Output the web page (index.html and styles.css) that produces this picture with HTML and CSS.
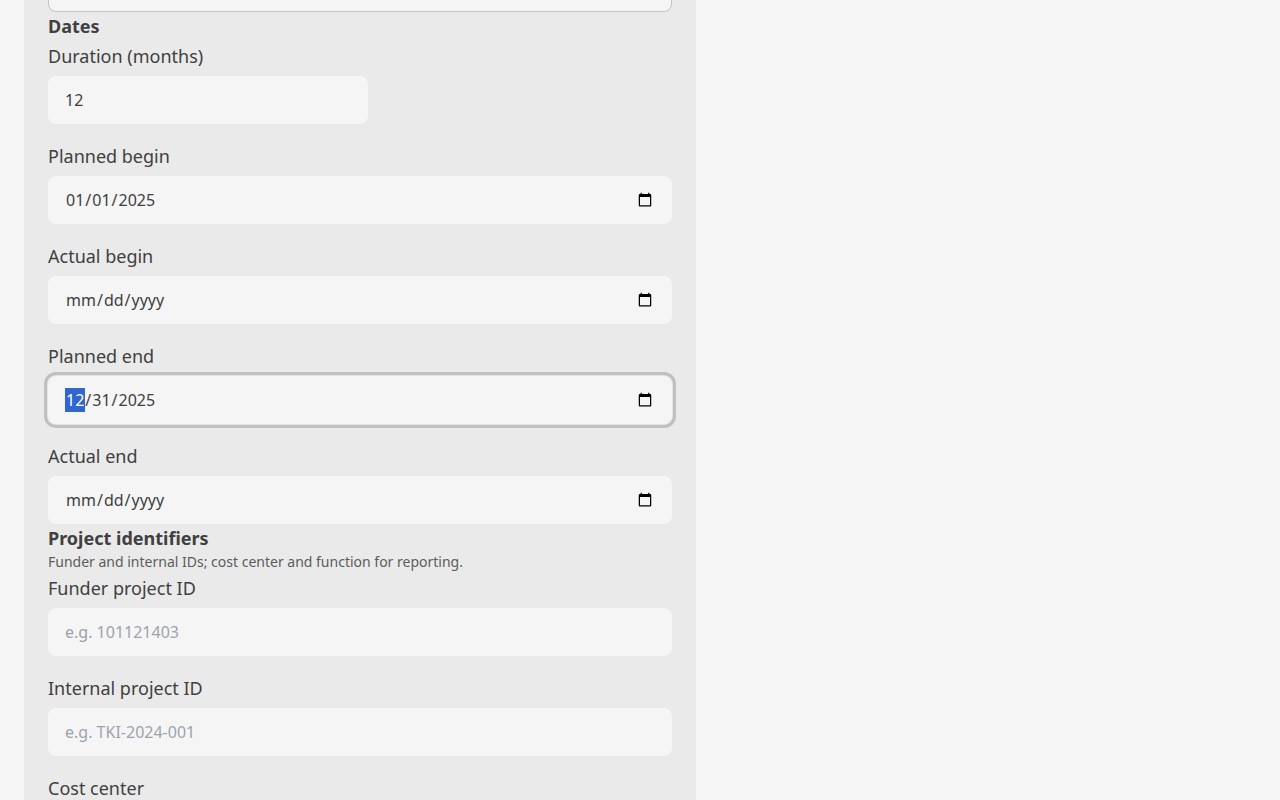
FILE: index.html
```html
<!DOCTYPE html>
<html lang="en">
<head>
    <meta charset="UTF-8">
    <meta name="viewport" content="width=device-width, initial-scale=1.0">
    <title>Project form</title>
    <link rel="stylesheet" href="styles.css">
</head>
<body>
    <div class="panel">
        <div class="cut-field"></div>
        <h3 class="section-title">Dates</h3>
        <div class="form-group">
            <label for="duration">Duration (months)</label>
            <input id="duration" class="short" type="number" value="12">
        </div>
        <div class="form-group">
            <label for="planned-begin">Planned begin</label>
            <input id="planned-begin" type="date" value="2025-01-01">
        </div>
        <div class="form-group">
            <label for="actual-begin">Actual begin</label>
            <input id="actual-begin" type="date">
        </div>
        <div class="form-group">
            <label for="planned-end">Planned end</label>
            <input id="planned-end" type="date" value="2025-12-31" autofocus>
        </div>
        <div class="form-group last">
            <label for="actual-end">Actual end</label>
            <input id="actual-end" type="date">
        </div>
        <h3 class="section-title">Project identifiers</h3>
        <p class="section-hint">Funder and internal IDs; cost center and function for reporting.</p>
        <div class="form-group">
            <label for="funder-id">Funder project ID</label>
            <input id="funder-id" type="text" placeholder="e.g. 101121403">
        </div>
        <div class="form-group">
            <label for="internal-id">Internal project ID</label>
            <input id="internal-id" type="text" placeholder="e.g. TKI-2024-001">
        </div>
        <div class="form-group">
            <label for="cost-center">Cost center</label>
            <input id="cost-center" type="text">
        </div>
    </div>
</body>
</html>
```

FILE: styles.css
```css
html, body {
    height: 800px;
    overflow: hidden;
}
body {
    margin: 0;
    background: #f5f5f5;
    color: #404040;
    font-family: "Noto Sans", sans-serif;
}
.panel {
    width: 624px;
    margin-left: 24px;
    padding: 0 24px;
    background: #eaeaea;
}
.cut-field {
    height: 12px;
    background: #f5f5f5;
    border: 1px solid #c4c4c4;
    border-top: none;
    border-radius: 0 0 8px 8px;
    box-sizing: border-box;
}
.section-title {
    margin: 0;
    font-size: 18px;
    line-height: 28px;
    font-weight: 700;
}
.section-hint {
    margin: 0;
    font-size: 14px;
    line-height: 20px;
    color: #5c5c5c;
}
.form-group {
    padding-top: 4px;
    margin-bottom: 16px;
}
.form-group.last {
    margin-bottom: 0;
}
.form-group label {
    display: block;
    font-size: 18px;
    line-height: 24px;
    margin: 0 0 8px;
}
.form-group input {
    display: block;
    width: 100%;
    height: 48px;
    box-sizing: border-box;
    padding: 0 17px;
    border: none;
    border-radius: 8px;
    background: #f5f5f5;
    color: #404040;
    font-family: "Noto Sans", sans-serif;
    font-size: 16px;
}
.form-group input.short {
    width: 320px;
}
.form-group input::placeholder {
    color: #9ca3af;
}
.form-group input:focus {
    outline: none;
    box-shadow: 0 0 0 1px #e2e2e2, 0 0 0 4px #c0c0c0;
}
```
